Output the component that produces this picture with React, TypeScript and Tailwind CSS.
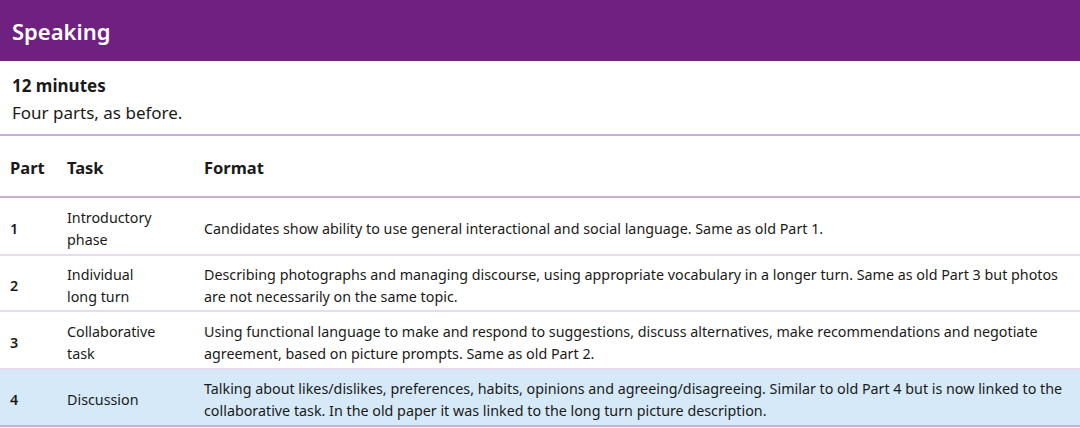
import React from 'react';

const rows = [
  { part: '1', task: ['Introductory', 'phase'], h: 'h-[58px]', format: 'Candidates show ability to use general interactional and social language. Same as old Part 1.' },
  { part: '2', task: ['Individual', 'long turn'], h: 'h-[56px]', format: 'Describing photographs and managing discourse, using appropriate vocabulary in a longer turn. Same as old Part 3 but photos are not necessarily on the same topic.' },
  { part: '3', task: ['Collaborative', 'task'], h: 'h-[58px]', format: 'Using functional language to make and respond to suggestions, discuss alternatives, make recommendations and negotiate agreement, based on picture prompts. Same as old Part 2.' },
  { part: '4', task: ['Discussion'], h: 'h-[57px]', format: 'Talking about likes/dislikes, preferences, habits, opinions and agreeing/disagreeing. Similar to old Part 4 but is now linked to the collaborative task. In the old paper it was linked to the long turn picture description.', highlight: true },
];

export default function App() {
  return (
    <div className="w-[1080px] h-[428px] bg-white text-[#1a1a1a] overflow-hidden" style={{ fontFamily: '"Noto Sans", "Open Sans", sans-serif' }}>
      <div className="h-[61px] bg-[#6f2181] flex items-center px-3">
        <h1 className="text-[22px] font-semibold text-white pt-[1px]">Speaking</h1>
      </div>
      <div className="px-3 pt-[11px] h-[75px] border-b-2 border-[#c8b0d8]">
        <p className="text-[17px] font-bold leading-[27px]">12 minutes</p>
        <p className="text-[17px] leading-[27px]">Four parts, as before.</p>
      </div>
      <div className="h-[62px] flex items-center border-b-2 border-[#c8b0d8] text-[16.5px] font-bold pt-[4px]">
        <div className="w-[67px] pl-[10px]">Part</div>
        <div className="w-[137px]">Task</div>
        <div>Format</div>
      </div>
      {rows.map(r => (
        <div
          key={r.part}
          className={`flex items-center ${r.h} pt-[5px] text-[14.3px] leading-[22px] ${r.highlight ? 'bg-[#d5e9f8] border-b-2 border-[#c8b0d8]' : 'border-b-2 border-[#e7dcef]'}`}
        >
          <div className="w-[67px] pl-[10px] font-semibold">{r.part}</div>
          <div className="w-[137px]">
            {r.task.map(t => <div key={t}>{t}</div>)}
          </div>
          <div className="flex-1 pr-[6px]">{r.format}</div>
        </div>
      ))}
    </div>
  );
}
